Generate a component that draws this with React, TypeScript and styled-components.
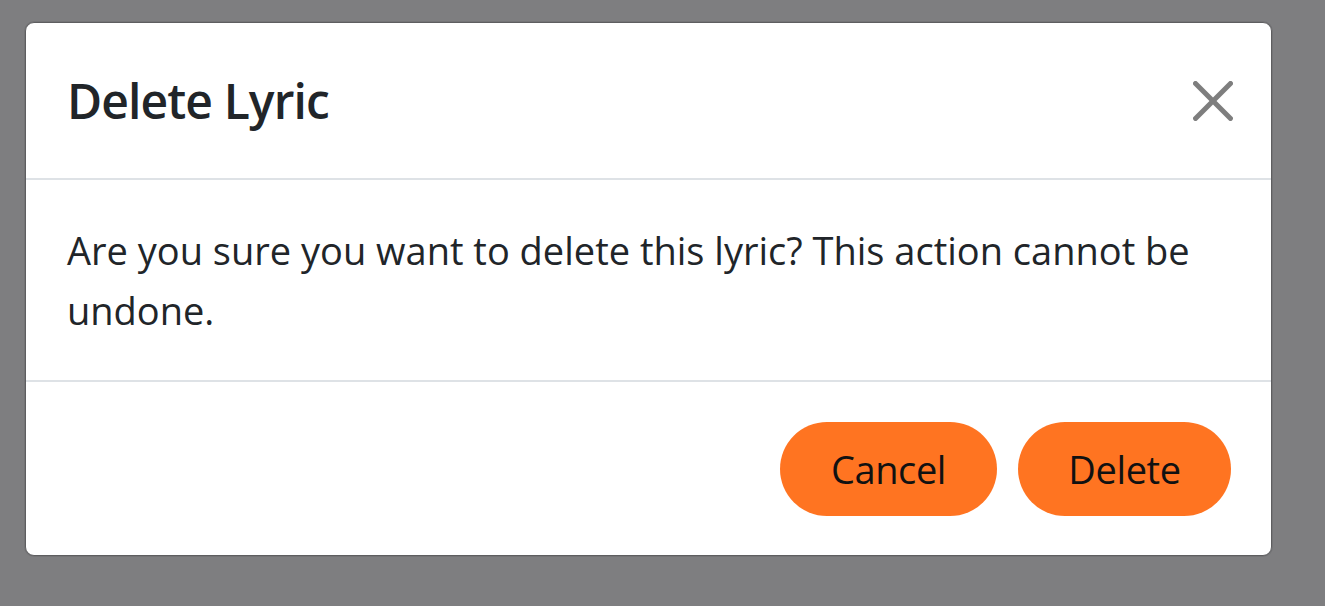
import React from "react";
import styled, { createGlobalStyle } from "styled-components";

const GlobalStyle = createGlobalStyle`
  html, body {
    margin: 0;
    padding: 0;
    background: #7e7e80;
  }
  body {
    font-family: "Open Sans", "Noto Sans", Arial, sans-serif;
    -webkit-font-smoothing: antialiased;
  }
  * { box-sizing: border-box; }
`;

const Backdrop = styled.div`
  min-height: 606px;
  padding: 22px 53px 0 25px;
  background: #7e7e80;
`;

const Dialog = styled.div`
  width: 1247px;
  background: #ffffff;
  border: 1px solid #5e5e60;
  border-radius: 9px;
  box-shadow: 0 0 0 1px rgba(0, 0, 0, 0.08);
  display: flex;
  flex-direction: column;
  color: #212529;
`;

const Header = styled.div`
  display: flex;
  align-items: center;
  justify-content: space-between;
  padding: 40px 38px 40px 41px;
  border-bottom: 2px solid #dee2e6;
`;

const Title = styled.h5`
  margin: 0;
  font-size: 48px;
  line-height: 75px;
  font-weight: 600;
  letter-spacing: -0.9px;
  color: #212529;
`;

const CloseButton = styled.button`
  width: 40px;
  height: 40px;
  padding: 0;
  border: 0;
  background: transparent;
  display: flex;
  align-items: center;
  justify-content: center;
  cursor: pointer;
  opacity: 0.5;
  svg { display: block; }
`;

const Body = styled.div`
  padding: 40px 40px 40px 41px;
  font-size: 38px;
  line-height: 60px;
  letter-spacing: 0px;
  color: #212529;
`;

const Footer = styled.div`
  display: flex;
  justify-content: flex-end;
  align-items: center;
  gap: 21px;
  padding: 40px 40px 39px 40px;
  border-top: 2px solid #dee2e6;
`;

const ActionButton = styled.button<{ $w: number }>`
  width: ${(p) => p.$w}px;
  height: 94px;
  border: 0;
  border-radius: 47px;
  background: #ff7421;
  color: #111111;
  font-family: inherit;
  font-size: 38px;
  letter-spacing: -0.4px;
  line-height: 60px;
  cursor: pointer;
  display: flex;
  align-items: center;
  justify-content: center;
  padding: 0;
`;

export default function App() {
  return (
    <>
      <GlobalStyle />
      <Backdrop>
        <Dialog role="dialog" aria-labelledby="delete-title">
          <Header>
            <Title id="delete-title">Delete Lyric</Title>
            <CloseButton aria-label="Close">
              <svg width="40" height="40" viewBox="0 0 16 16" fill="#000">
                <path d="M.293.293a1 1 0 0 1 1.414 0L8 6.586 14.293.293a1 1 0 1 1 1.414 1.414L9.414 8l6.293 6.293a1 1 0 0 1-1.414 1.414L8 9.414l-6.293 6.293a1 1 0 0 1-1.414-1.414L6.586 8 .293 1.707a1 1 0 0 1 0-1.414z" />
              </svg>
            </CloseButton>
          </Header>
          <Body>
            Are you sure you want to delete this lyric? This action cannot be undone.
          </Body>
          <Footer>
            <ActionButton $w={217}>Cancel</ActionButton>
            <ActionButton $w={213}>Delete</ActionButton>
          </Footer>
        </Dialog>
      </Backdrop>
    </>
  );
}
